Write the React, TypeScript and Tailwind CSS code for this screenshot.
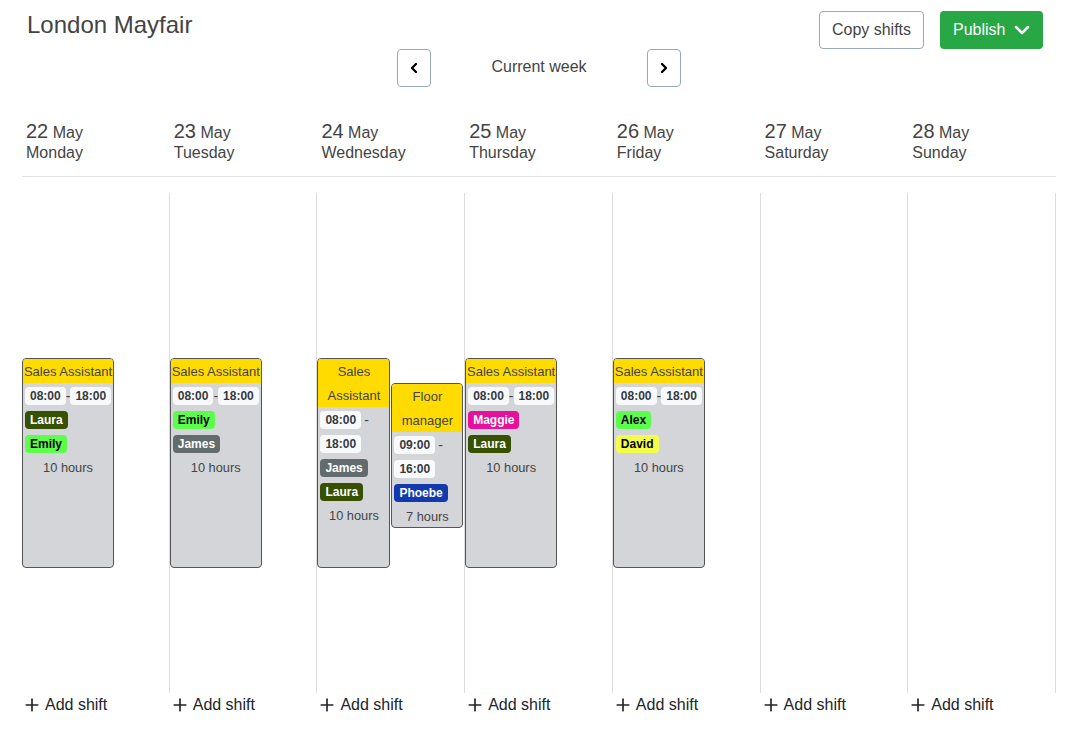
import { ChevronDown, ChevronLeft, ChevronRight, Plus } from "lucide-react";

type Person = { name: string; cls: string };

type Shift = {
  role: string;
  start: string;
  end: string;
  people: Person[];
  hours: string;
  top: string;
  height: string;
  width: string;
  wrap?: boolean;
};

const LAURA = { name: "Laura", cls: "bg-[#375001] text-white" };
const EMILY = { name: "Emily", cls: "bg-[#5dfd4c] text-black" };
const JAMES = { name: "James", cls: "bg-[#636c6c] text-white" };
const MAGGIE = { name: "Maggie", cls: "bg-[#e7109b] text-white" };
const PHOEBE = { name: "Phoebe", cls: "bg-[#1239ae] text-white" };
const ALEX = { name: "Alex", cls: "bg-[#5dfd4c] text-black" };
const DAVID = { name: "David", cls: "bg-[#f4fd4c] text-black" };

const sales = (people: Person[]): Shift => ({
  role: "Sales Assistant",
  start: "08:00",
  end: "18:00",
  people,
  hours: "10 hours",
  top: "mt-[165px]",
  height: "h-[210px]",
  width: "w-[92px]",
});

const DAYS: { num: number; name: string; shifts: Shift[] }[] = [
  { num: 22, name: "Monday", shifts: [sales([LAURA, EMILY])] },
  { num: 23, name: "Tuesday", shifts: [sales([EMILY, JAMES])] },
  {
    num: 24,
    name: "Wednesday",
    shifts: [
      { ...sales([JAMES, LAURA]), width: "w-[73px]", wrap: true },
      {
        role: "Floor manager",
        start: "09:00",
        end: "16:00",
        people: [PHOEBE],
        hours: "7 hours",
        top: "mt-[190px]",
        height: "h-[145px]",
        width: "w-[72px]",
        wrap: true,
      },
    ],
  },
  { num: 25, name: "Thursday", shifts: [sales([MAGGIE, LAURA])] },
  { num: 26, name: "Friday", shifts: [sales([ALEX, DAVID])] },
  { num: 27, name: "Saturday", shifts: [] },
  { num: 28, name: "Sunday", shifts: [] },
];

function TimeChip({ value }: { value: string }) {
  return (
    <span className="inline-block h-[18px] rounded-[4px] bg-[#f8f9fa] px-[5px] text-xs leading-[18px] font-bold text-[#343a40]">
      {value}
    </span>
  );
}

function ShiftCard({ shift }: { shift: Shift }) {
  return (
    <div
      className={`${shift.top} ${shift.height} ${shift.width} shrink-0 overflow-hidden rounded-[4px] border border-[#555] bg-[#d3d5d8] text-center text-[#444]`}
    >
      <div className="bg-[#ffdb00] text-[13px] leading-6">
        <span className={`inline-block translate-y-px ${shift.wrap ? "" : "whitespace-nowrap"}`}>{shift.role}</span>
      </div>
      <div className="px-[2px] pt-[1px] text-left text-sm leading-6">
        {shift.wrap ? (
          <>
            <div className="flex h-6 items-center gap-[3px]">
              <TimeChip value={shift.start} /> -
            </div>
            <div className="flex h-6 items-center">
              <TimeChip value={shift.end} />
            </div>
          </>
        ) : (
          <div className="flex h-6 items-center justify-between">
            <TimeChip value={shift.start} />
            <span>-</span>
            <TimeChip value={shift.end} />
          </div>
        )}
        {shift.people.map((p) => (
          <div key={p.name} className="flex h-6 items-center">
            <span className={`h-[18px] rounded-[4px] px-[5px] text-xs leading-[18px] font-bold ${p.cls}`}>
              {p.name}
            </span>
          </div>
        ))}
      </div>
      <div className="text-[12.8px] leading-6">{shift.hours}</div>
    </div>
  );
}

export default function App() {
  return (
    <div className="h-[739px] w-[1071px] overflow-hidden bg-white pl-[22px] font-['Liberation_Sans',Arial,sans-serif] text-[#444]">
      {/* top bar */}
      <div className="relative h-[108px]">
        <h1 className="pt-[10px] pl-[5px] text-2xl leading-[30px] font-normal">London Mayfair</h1>
        <div className="absolute top-[11px] right-[28px] flex gap-4">
          <button className="h-[38px] w-[105px] rounded-[4px] border border-[#9aa9b9] bg-white text-base text-[#444]">
            Copy shifts
          </button>
          <button className="flex h-[38px] w-[103px] items-center gap-[5px] rounded-[4px] bg-[#28a745] pl-[13px] text-base text-white">
            Publish
            <ChevronDown className="h-6 w-6" strokeWidth={2.5} />
          </button>
        </div>
        <div className="absolute top-[49px] left-[375px] flex w-[284px] items-start justify-between">
          <button className="flex h-[38px] w-[34px] items-center justify-center rounded-[4px] border border-[#9aa9b9] bg-white text-black">
            <ChevronLeft className="h-4 w-4" strokeWidth={3.5} />
          </button>
          <span className="pt-[6px] text-base leading-6">Current week</span>
          <button className="flex h-[38px] w-[34px] items-center justify-center rounded-[4px] border border-[#9aa9b9] bg-white text-black">
            <ChevronRight className="h-4 w-4" strokeWidth={3.5} />
          </button>
        </div>
      </div>

      {/* day headings */}
      <div className="grid h-[69px] w-[1034px] grid-cols-7 border-b border-[#dee2e6]">
        {DAYS.map((d) => (
          <div key={d.num} className="pt-[13px] pl-1">
            <div className="text-base leading-5">
              <span className="text-xl leading-5">{d.num}</span> May
            </div>
            <div className="text-base leading-5">{d.name}</div>
          </div>
        ))}
      </div>

      {/* timeline columns */}
      <div className="mt-4 grid h-[500px] w-[1034px] grid-cols-7">
        {DAYS.map((d) => (
          <div key={d.num} className="flex items-start gap-px border-r border-[#dcdcdc]">
            {d.shifts.map((s) => (
              <ShiftCard key={s.role} shift={s} />
            ))}
          </div>
        ))}
      </div>

      {/* add shift row */}
      <div className="grid w-[1034px] grid-cols-7 pt-[1px]">
        {DAYS.map((d) => (
          <div key={d.num} className="flex h-[22px] items-center gap-[3px] text-base text-[#212529]">
            <Plus className="h-5 w-5" strokeWidth={2} />
            Add shift
          </div>
        ))}
      </div>
    </div>
  );
}
